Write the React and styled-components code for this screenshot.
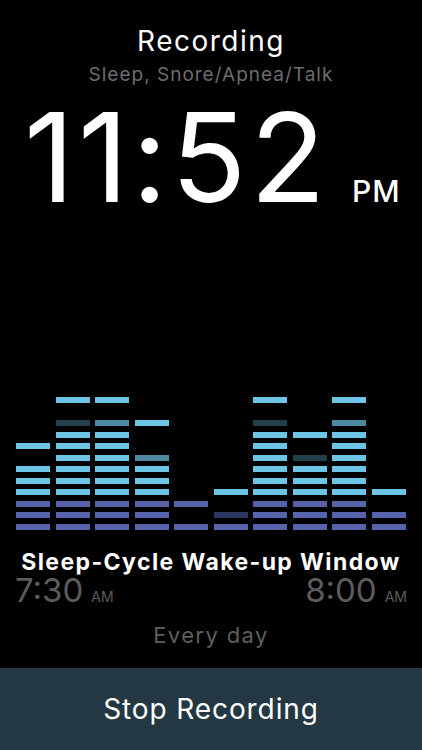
import React from "react";
import styled, { createGlobalStyle } from "styled-components";

const GlobalStyle = createGlobalStyle`
  html, body {
    margin: 0;
    padding: 0;
    background: #000;
  }
  body {
    font-family: Inter, "Noto Sans", "Liberation Sans", sans-serif;
    color: #fff;
  }
`;

// cell codes: 0 off, 1/2 lit, 3 mid fading, 4 dim fading
const levels = [
  "000010111222".split(""),
  "104111111222".split(""),
  "103111111222".split(""),
  "001003111222".split(""),
  "000000000202".split(""),
  "000000001042".split(""),
  "104111111222".split(""),
  "000104111222".split(""),
  "103111111222".split(""),
  "000000001022".split(""),
];

const cellColor = (code, row) => {
  const purple = row >= 9;
  if (code === "1" || code === "2") return purple ? "#5663aa" : "#6cc5e5";
  if (code === "3") return purple ? "#3d4a80" : "#4d8aa2";
  if (code === "4") return purple ? "#2c3862" : "#22404b";
  return "transparent";
};

function App() {
  return (
    <>
      <GlobalStyle />
      <Screen>
        <Header>
          <Title>Recording</Title>
          <Subtitle>Sleep, Snore/Apnea/Talk</Subtitle>
        </Header>
        <Clock>
          <ClockTime>11:52</ClockTime>
          <ClockSuffix>PM</ClockSuffix>
        </Clock>
        <Meter>
          {levels.map((col, c) => (
            <MeterColumn key={c}>
              {col.map((code, r) => (
                <Cell key={r} color={cellColor(code, r)} />
              ))}
            </MeterColumn>
          ))}
        </Meter>
        <WindowTitle>Sleep-Cycle Wake-up Window</WindowTitle>
        <WindowTimes>
          <WindowTime>
            7:30<small>AM</small>
          </WindowTime>
          <WindowTime>
            8:00<small>AM</small>
          </WindowTime>
        </WindowTimes>
        <Repeat>Every day</Repeat>
        <StopButton>Stop Recording</StopButton>
      </Screen>
    </>
  );
}

const Screen = styled.div`
  width: 422px;
  height: 750px;
  background: #000;
  display: flex;
  flex-direction: column;
  overflow: hidden;
`;

const Header = styled.div`
  display: flex;
  flex-direction: column;
  align-items: center;
  padding-top: 26px;
`;

const Title = styled.div`
  font-size: 28px;
  line-height: 30px;
  font-weight: 400;
  letter-spacing: 1.5px;
  color: #fff;
`;

const Subtitle = styled.div`
  font-size: 19px;
  line-height: 22px;
  letter-spacing: 1px;
  color: #6d6d6d;
  margin-top: 8px;
`;

const Clock = styled.div`
  display: flex;
  align-items: baseline;
  padding-left: 24px;
  margin-top: 11px;
  height: 120px;
`;

const ClockTime = styled.div`
  font-size: 124px;
  line-height: 120px;
  font-weight: 400;
  letter-spacing: 3.5px;
  color: #fff;
`;

const ClockSuffix = styled.div`
  font-size: 30px;
  font-weight: 500;
  letter-spacing: 1px;
  margin-left: 23px;
`;

const Meter = styled.div`
  display: grid;
  grid-template-columns: repeat(10, 34px);
  column-gap: 5.5px;
  padding-left: 16px;
  margin-top: 180px;
`;

const MeterColumn = styled.div`
  display: grid;
  grid-template-rows: repeat(12, 6px);
  row-gap: 5.55px;
`;

const Cell = styled.div`
  background: ${(p) => p.color};
`;

const WindowTitle = styled.div`
  margin-top: 21px;
  text-align: center;
  font-size: 23px;
  line-height: 22px;
  font-weight: 700;
  letter-spacing: 1.4px;
  color: #fff;
`;

const WindowTimes = styled.div`
  display: flex;
  justify-content: space-between;
  padding: 0 15px 0 15px;
  margin-top: 0;
`;

const WindowTime = styled.div`
  font-size: 33px;
  line-height: 34px;
  color: #5c5c5c;
  small {
    font-size: 14px;
    margin-left: 8px;
  }
`;

const Repeat = styled.div`
  margin-top: 7px;
  text-align: center;
  font-size: 22px;
  line-height: 28px;
  letter-spacing: 1.4px;
  color: #5f5f5f;
`;

const StopButton = styled.button`
  margin-top: auto;
  height: 82px;
  border: none;
  background: #233843;
  color: #fff;
  font-family: inherit;
  font-size: 28px;
  font-weight: 400;
  letter-spacing: 0.9px;
  cursor: pointer;
`;

export default App;
